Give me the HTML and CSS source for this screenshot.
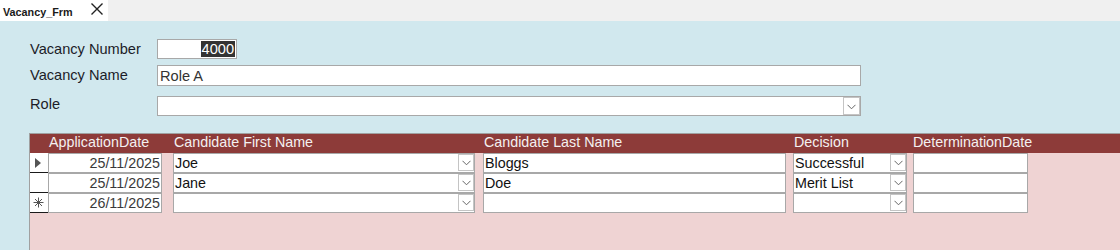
FILE: index.html
```html
<!DOCTYPE html>
<html>
<head>
<meta charset="utf-8">
<link rel="stylesheet" href="styles.css">
</head>
<body>
<div class="tabbar">
  <div class="tab">
    <span class="tab-title">Vacancy_Frm</span>
    <svg class="tab-close" width="14" height="14" viewBox="0 0 14 14"><path d="M1.5 1.5 L12.5 12.5 M12.5 1.5 L1.5 12.5" stroke="#222" stroke-width="1.4" fill="none"/></svg>
  </div>
</div>
<div class="form">
  <div class="field f-number">
    <div class="label">Vacancy Number</div>
    <div class="input num"><span class="sel">4000</span></div>
  </div>
  <div class="field f-name">
    <div class="label">Vacancy Name</div>
    <div class="input wide">Role A</div>
  </div>
  <div class="field f-role">
    <div class="label">Role</div>
    <div class="input wide combo"><span class="val"></span><span class="dd"><svg width="9" height="6" viewBox="0 0 9 6"><path d="M0.5 0.8 L4.5 4.8 L8.5 0.8" stroke="#666" stroke-width="1" fill="none"/></svg></span></div>
  </div>

  <div class="subform">
    <div class="sf-head">
      <div class="h c-sel"></div>
      <div class="h c-date">ApplicationDate</div>
      <div class="h c-first">Candidate First Name</div>
      <div class="h c-last">Candidate Last Name</div>
      <div class="h c-dec">Decision</div>
      <div class="h c-det">DeterminationDate</div>
    </div>

    <div class="sf-row">
      <div class="cell c-sel sel-cell"><svg width="8" height="12" viewBox="0 0 8 12"><path d="M1 1 L7 6 L1 11 Z" fill="#555"/></svg></div>
      <div class="cell c-date box date">25/11/2025</div>
      <div class="cell c-first box combo"><span class="val">Joe</span><span class="dd"><svg width="9" height="6" viewBox="0 0 9 6"><path d="M0.5 0.8 L4.5 4.8 L8.5 0.8" stroke="#666" stroke-width="1" fill="none"/></svg></span></div>
      <div class="cell c-last box">Bloggs</div>
      <div class="cell c-dec box combo"><span class="val">Successful</span><span class="dd"><svg width="9" height="6" viewBox="0 0 9 6"><path d="M0.5 0.8 L4.5 4.8 L8.5 0.8" stroke="#666" stroke-width="1" fill="none"/></svg></span></div>
      <div class="cell c-det box"></div>
    </div>

    <div class="sf-row">
      <div class="cell c-sel sel-cell"></div>
      <div class="cell c-date box date">25/11/2025</div>
      <div class="cell c-first box combo"><span class="val">Jane</span><span class="dd"><svg width="9" height="6" viewBox="0 0 9 6"><path d="M0.5 0.8 L4.5 4.8 L8.5 0.8" stroke="#666" stroke-width="1" fill="none"/></svg></span></div>
      <div class="cell c-last box">Doe</div>
      <div class="cell c-dec box combo"><span class="val">Merit List</span><span class="dd"><svg width="9" height="6" viewBox="0 0 9 6"><path d="M0.5 0.8 L4.5 4.8 L8.5 0.8" stroke="#666" stroke-width="1" fill="none"/></svg></span></div>
      <div class="cell c-det box"></div>
    </div>

    <div class="sf-row last">
      <div class="cell c-sel sel-cell"><svg width="11" height="11" viewBox="0 0 11 11"><path d="M5.5 0.5 V10.5 M0.5 5.5 H10.5 M2 2 L9 9 M9 2 L2 9" stroke="#555" stroke-width="1" fill="none"/></svg></div>
      <div class="cell c-date box date">26/11/2025</div>
      <div class="cell c-first box combo"><span class="val"></span><span class="dd"><svg width="9" height="6" viewBox="0 0 9 6"><path d="M0.5 0.8 L4.5 4.8 L8.5 0.8" stroke="#666" stroke-width="1" fill="none"/></svg></span></div>
      <div class="cell c-last box"></div>
      <div class="cell c-dec box combo"><span class="val"></span><span class="dd"><svg width="9" height="6" viewBox="0 0 9 6"><path d="M0.5 0.8 L4.5 4.8 L8.5 0.8" stroke="#666" stroke-width="1" fill="none"/></svg></span></div>
      <div class="cell c-det box"></div>
    </div>
  </div>
</div>
</body>
</html>
```

FILE: styles.css
```css
* { box-sizing: border-box; }
html, body { margin: 0; padding: 0; }
body {
  width: 1120px;
  height: 250px;
  overflow: hidden;
  font-family: "Liberation Sans", Arial, sans-serif;
  background: #d1e8ee;
}

.tabbar {
  height: 21px;
  background: #f0f0f0;
  display: flex;
}
.tab {
  width: 108px;
  height: 21px;
  background: #ffffff;
  display: flex;
  align-items: center;
  padding-left: 3px;
}
.tab-title {
  font-size: 10.8px;
  font-weight: bold;
  color: #1a1a1a;
  margin-top: 3px;
}
.tab-close {
  margin-left: 17px;
  margin-top: -4px;
}

.form {
  padding-left: 30px;
  display: flex;
  flex-direction: column;
}
.field {
  display: flex;
  align-items: center;
}
.label {
  width: 127px;
  font-size: 14.6px;
  color: #1c1c28;
}
.f-number { margin-top: 18px; height: 20px; }
.f-name { margin-top: 6px; height: 21px; }
.f-name .label { margin-top: -2px; }
.f-role { margin-top: 10px; height: 20px; align-items: flex-start; }
.f-role .label { margin-top: 0px; }

.input {
  height: 100%;
  background: #fff;
  border: 1px solid #a8a8a8;
  font-size: 14.6px;
  color: #333;
  display: flex;
  align-items: center;
  padding-left: 2px;
}
.input.num {
  width: 80px;
  justify-content: flex-end;
  padding: 1px 1px 1px 0;
  align-items: stretch;
}
.sel {
  background: #333333;
  color: #ffffff;
  padding: 0 1px;
  display: flex;
  align-items: center;
}
.input.wide { width: 704px; }

.combo {
  display: flex;
  align-items: stretch;
}
.combo .val {
  flex: 1;
  display: flex;
  align-items: center;
}
.dd {
  width: 17px;
  border: 1px solid #c4c4c4;
  background: #fff;
  display: flex;
  align-items: center;
  justify-content: center;
}
.dd svg { margin-top: 1px; }

.subform {
  margin-top: 17px;
  margin-left: -1px;
  height: 117px;
  border-left: 1px solid #a0a0a0;
  border-top: 1px solid #a0a0a0;
  background: #efd3d3;
}
.sf-head {
  height: 19px;
  background: #8d3b39;
  display: flex;
  align-items: flex-start;
}
.h {
  color: #f4f0f0;
  font-size: 14.3px;
  line-height: 17px;
  padding-left: 1px;
  white-space: nowrap;
}
.c-sel { width: 18px; }
.c-date { width: 114px; }
.c-first { width: 302px; margin-left: 11px; }
.c-last { width: 303px; margin-left: 8px; }
.c-dec { width: 114px; margin-left: 7px; }
.c-det { width: 115px; margin-left: 6px; }
.h.c-det { margin-left: 5px; }

.sf-row {
  height: 20px;
  display: flex;
}
.cell {
  height: 20px;
  font-size: 14.3px;
  color: #111;
}
.sel-cell {
  background: #fff;
  border-bottom: 1px solid #1a1a1a;
  display: flex;
  align-items: center;
  justify-content: center;
  padding-right: 2px;
}
.box {
  background: #fff;
  border: 1px solid #a8a8a8;
  display: flex;
  align-items: center;
  padding-left: 1px;
  white-space: nowrap;
  overflow: hidden;
}
.box.combo { align-items: stretch; }
.box.combo .dd { width: 16px; margin: 0 0 1px 0; }
.date {
  justify-content: flex-end;
  padding-right: 1px;
  color: #3a3a3a;
}
```
